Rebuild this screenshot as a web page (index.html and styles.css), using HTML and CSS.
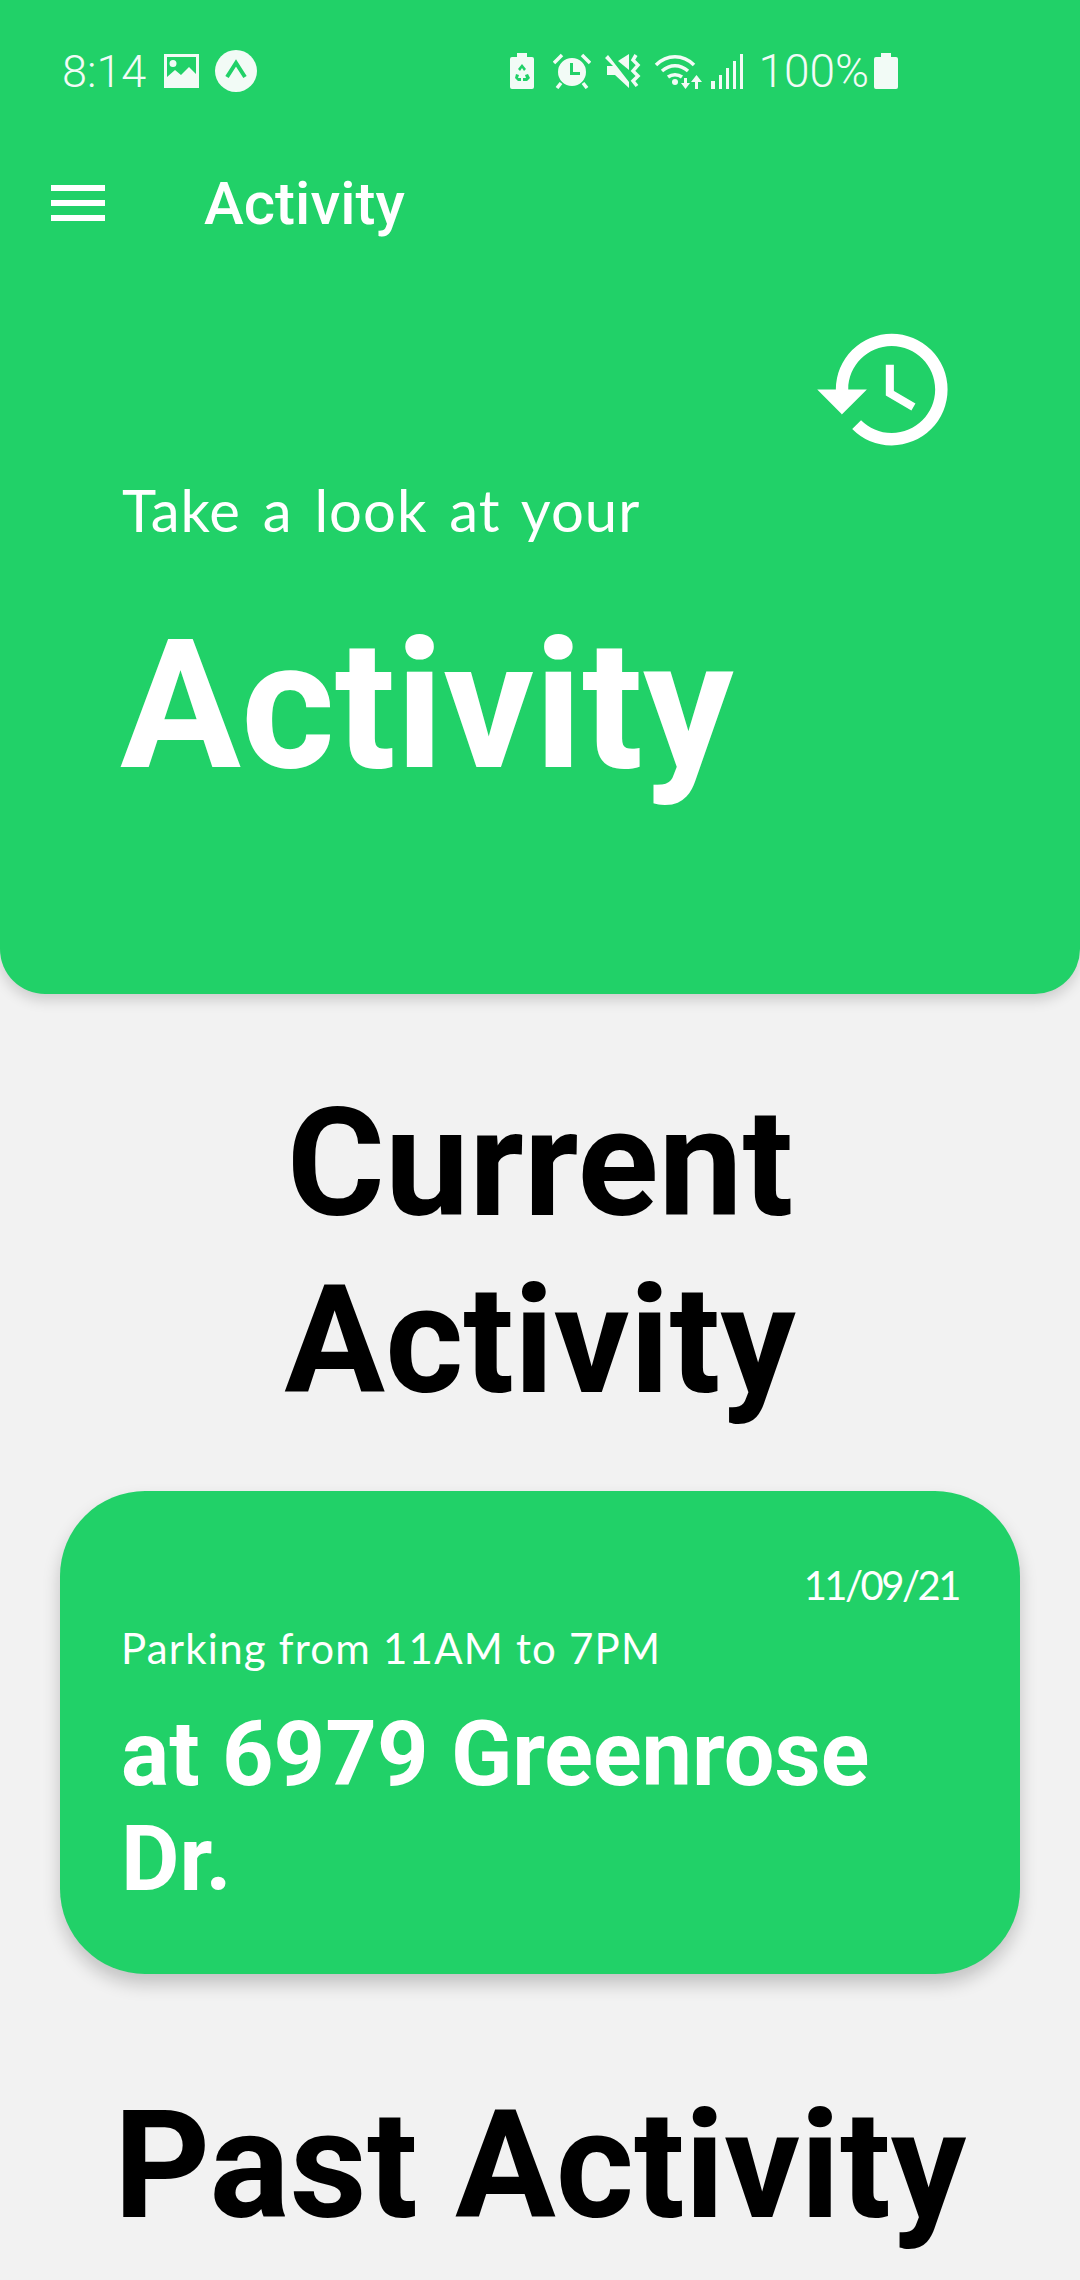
FILE: index.html
```html
<!DOCTYPE html>
<html lang="en">
<head>
    <meta charset="UTF-8">
    <meta name="viewport" content="width=device-width, initial-scale=1.0">
    <title>Activity</title>
    <link rel="stylesheet" href="styles.css">
</head>
<body>
    <div id="hero">
        <div id="statusbar">
            <div class="status-left">
                <span class="status-text">8:14</span>
                <svg class="ic-image" viewBox="0 0 35 34"><path fill="#f2fbf6" fill-rule="evenodd" d="M0 0h35v34H0zM3 3v20l8-7 6 5 8-8 7 7V3zM9 6a3.500 3.500 0 1 1 0 7 3.500 3.500 0 0 1 0-7z"/></svg>
                <svg class="ic-app" viewBox="0 0 42 42"><circle cx="21" cy="21" r="21" fill="#f2fbf6"/><path d="M12 27l9-14 9 14" fill="none" stroke="#21d168" stroke-width="4"/></svg>
            </div>
            <div class="status-right">
                <svg class="ic-batt" viewBox="0 0 24 36"><path fill="#f2fbf6" fill-rule="evenodd" d="M7 0h10v4h5a2 2 0 0 1 2 2v28a2 2 0 0 1-2 2H2a2 2 0 0 1-2-2V6a2 2 0 0 1 2-2h5zM12 11l-4 5 2 2 2-3 2 3 2-2zM6 21l-1 4 3 3h3v-3H8l1-3zM18 21l-3 1 1 3h-3v3h4l3-3z"/></svg>
                <svg class="ic-alarm" viewBox="0 0 38 36"><path fill="#f2fbf6" fill-rule="evenodd" d="M19 5a14 14 0 1 1 0 28 14 14 0 0 1 0-28zM17 10v12h10v-3h-7v-9z"/><path stroke="#f2fbf6" stroke-width="3.500" d="M1 10L9 2M37 10L29 2M8 30l-4 5M30 30l4 5"/></svg>
                <svg class="ic-mute" viewBox="0 0 37 36"><path fill="#f2fbf6" d="M0 5l3-3 21 27v6L10 22H2v-9h6z"/><path fill="#f2fbf6" d="M13 8l11-7v16z"/><path fill="none" stroke="#f2fbf6" stroke-width="3.500" d="M31 2l-3 5 5 5-5 6 5 5-5 5 4 5"/></svg>
                <svg class="ic-wifi" viewBox="0 0 48 36"><path fill="none" stroke="#f2fbf6" stroke-width="3.500" d="M2 12c11-11 27-11 38 0M8 18c8-7 18-7 26 0M14 24c4-3 10-3 14 0"/><circle cx="21" cy="29" r="3" fill="#f2fbf6"/><path fill="#f2fbf6" d="M30 25h3v5h3l-4.500 6-4.500-6h3zM41 36h3v-7h4l-5.500-7-5.500 7h4z"/></svg>
                <svg class="ic-signal" viewBox="0 0 32 36"><path fill="#f2fbf6" d="M0 28h4v8H0zM8 22h3v14H8zM15 15h3v21h-3zM22 8h3v28h-3zM29 1h3v35h-3z"/></svg>
                <span class="status-text pct">100%</span>
                <svg class="ic-full" viewBox="0 0 24 36"><path fill="#f2fbf6" d="M7 0h10v4h5a2 2 0 0 1 2 2v28a2 2 0 0 1-2 2H2a2 2 0 0 1-2-2V6a2 2 0 0 1 2-2h5z"/></svg>
            </div>
        </div>

        <div id="appbar">
            <div class="menu-btn"><span></span><span></span><span></span></div>
            <div class="appbar-title">Activity</div>
        </div>

        <div class="hero-icon">
            <svg viewBox="0 0 24 24">
                <path fill="#ffffff" d="M13 3a9 9 0 0 0-9 9H1l3.890 3.890.070.140L9 12H6c0-3.870 3.130-7 7-7s7 3.130 7 7-3.130 7-7 7c-1.930 0-3.680-.790-4.940-2.060l-1.420 1.420A8.954 8.954 0 0 0 13 21a9 9 0 0 0 0-18z"/>
                <path fill="none" stroke="#ffffff" stroke-width="1.300" d="M12.700 8v4.600l3.800 2.200"/>
            </svg>
        </div>
        <div class="hero-sub">Take a look at your</div>
        <div class="hero-title">Activity</div>
    </div>

    <h1 class="section-title first">Current<br>Activity</h1>

    <div class="activity-card">
        <div class="card-date">11/09/21</div>
        <div class="card-label">Parking from 11AM to 7PM</div>
        <div class="card-place">at 6979 Greenrose Dr.</div>
    </div>

    <h1 class="section-title">Past Activity</h1>
</body>
</html>
```

FILE: styles.css
```css
html, body {
    margin: 0;
    height: 2280px;
    overflow: hidden;
}

body {
    background-color: #f2f2f2;
    font-family: Roboto, sans-serif;
}

#hero {
    height: 994px;
    box-sizing: border-box;
    background-color: #21d168;
    border-radius: 0 0 45px 45px;
    box-shadow: 0 6px 14px rgba(0, 0, 0, 0.16);
    color: #ffffff;
    overflow: hidden;
}

/* status bar */
#statusbar {
    display: flex;
    align-items: center;
    height: 36px;
    padding: 53px 182px 0 62px;
}

.status-left, .status-right {
    display: flex;
    align-items: center;
}

.status-right {
    margin-left: auto;
}

.status-text {
    font-size: 45px;
    font-weight: 300;
    color: #f2fbf6;
}

.ic-image { width: 35px; height: 34px; margin-left: 18px; }
.ic-app { width: 42px; height: 42px; margin-left: 16px; }
.ic-batt { width: 24px; height: 36px; }
.ic-alarm { width: 38px; height: 36px; margin-left: 19px; }
.ic-mute { width: 37px; height: 36px; margin-left: 14px; }
.ic-wifi { width: 48px; height: 36px; margin-left: 12px; }
.ic-signal { width: 32px; height: 36px; margin-left: 9px; }
.pct { margin-left: 15px; font-size: 46px; }
.ic-full { width: 24px; height: 36px; margin-left: 5px; }

/* app bar */
#appbar {
    display: flex;
    align-items: center;
    height: 70px;
    margin-top: 79px;
    padding-left: 51px;
}

.menu-btn {
    display: flex;
    flex-direction: column;
    gap: 9px;
    width: 54px;
}

.menu-btn span {
    height: 6px;
    background-color: #ffffff;
}

.appbar-title {
    margin-left: 99px;
    font-size: 60px;
    font-weight: 500;
}

.hero-icon {
    display: flex;
    justify-content: flex-end;
    margin-top: 77px;
    padding-right: 120px;
}

.hero-icon svg {
    width: 149px;
    height: 149px;
}

.hero-sub {
    margin-top: 11px;
    padding-left: 122px;
    font-family: Lato, sans-serif;
    font-size: 58px;
    letter-spacing: 1px;
    word-spacing: 6px;
}

.hero-title {
    margin-top: 59px;
    padding-left: 120px;
    font-size: 180px;
    font-weight: 700;
    line-height: 206px;
}

/* headings */
.section-title {
    margin: 0;
    color: #000000;
    font-size: 150px;
    font-weight: 700;
    line-height: 177px;
    text-align: center;
}

.section-title.first {
    margin-top: 82px;
    margin-bottom: 61px;
}

/* current activity card */
.activity-card {
    box-sizing: border-box;
    height: 483px;
    margin: 0 60px 104px;
    padding: 70px 61px 0 61px;
    background-color: #21d168;
    border-radius: 85px;
    box-shadow: 0 10px 18px rgba(0, 0, 0, 0.2);
    color: #ffffff;
}

.card-date {
    font-family: Lato, sans-serif;
    font-size: 40px;
    letter-spacing: -2.500px;
    text-align: right;
}

.card-label {
    margin-top: 14px;
    font-family: Lato, sans-serif;
    font-size: 42px;
    letter-spacing: 1.200px;
}

.card-place {
    margin-top: 29px;
    font-size: 90px;
    font-weight: 700;
    line-height: 105px;
}
```
